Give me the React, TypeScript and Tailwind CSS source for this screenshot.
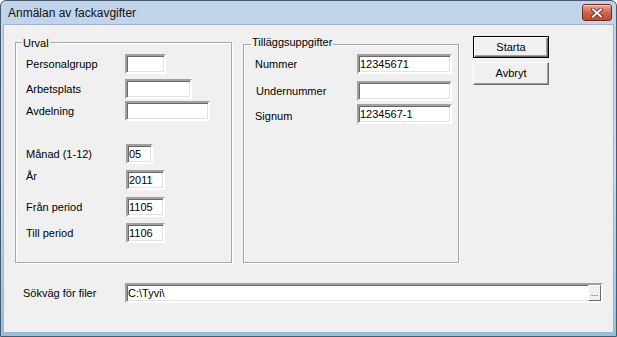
const sunken =
  "bg-white border-2 border-t-[#a0a0a0] border-l-[#a0a0a0] border-r-white border-b-white shadow-[inset_1px_1px_0_#696969,inset_-1px_-1px_0_#e3e3e3] h-[20px] flex items-center pl-[1px] text-black";

function Field({ value, w }: { value?: string; w: string }) {
  return <div className={`${sunken} ${w}`}>{value}</div>;
}

function CloseButton() {
  return (
    <button className="ml-auto mr-[4px] mt-[3px] self-start w-[30px] h-[17px] rounded-[3px] border border-[#6e2a1c] bg-gradient-to-b from-[#e9a99a] via-[#d2634c] to-[#c44a2f] shadow-[inset_0_1px_0_#f5cfc4] flex items-center justify-center">
      <svg width="12" height="10" viewBox="0 0 12 10">
        <path d="M2 1.5 L10 8.5 M10 1.5 L2 8.5" stroke="#5a2418" strokeWidth="3.6" strokeLinecap="square" />
        <path d="M2 1.5 L10 8.5 M10 1.5 L2 8.5" stroke="#ffffff" strokeWidth="2" strokeLinecap="square" />
      </svg>
    </button>
  );
}

export default function App() {
  return (
    <div className="w-[617px] h-[337px] bg-white font-['Liberation_Sans',Arial,sans-serif]">
      <div className="w-full h-full flex flex-col rounded-t-[6px] border border-[#4a5a6e] bg-gradient-to-b from-[#bfd4eb] via-[#c9dcf1] to-[#8fc4e8]">
        {/* title bar */}
        <div className="h-[23px] flex items-center pl-[7px]">
          <span className="text-[12px] leading-[15px] text-[#111] mt-[1px]">Anmälan av fackavgifter</span>
          <CloseButton />
        </div>

        {/* client area */}
        <div className="flex-1 mx-[2px] mb-[3px] border border-[#9fb3c9] bg-[#f0f0f0] text-[11px] leading-[13px] text-black">
          <div className="flex items-start pt-[11px] pl-[11px]">
            {/* Urval */}
            <div className="relative mt-[6px] w-[217px] h-[221px] border border-[#a8a8a8] shadow-[inset_1px_1px_0_#fff,1px_1px_0_#fff] pl-[10px] pt-[11px]">
              <span className="absolute -top-[6px] left-[6px] bg-[#f0f0f0] px-[1px]">Urval</span>
              <div className="flex items-center h-[20px]">
                <span className="w-[99px]">Personalgrupp</span>
                <Field w="w-[41px]" />
              </div>
              <div className="flex items-center h-[20px] mt-[5px]">
                <span className="w-[99px]">Arbetsplats</span>
                <Field w="w-[67px]" />
              </div>
              <div className="flex items-center h-[20px] mt-[2px]">
                <span className="w-[99px]">Avdelning</span>
                <Field w="w-[85px]" />
              </div>
              <div className="flex items-center h-[20px] mt-[23px]">
                <span className="w-[100px]">Månad (1-12)</span>
                <Field value="05" w="w-[27px]" />
              </div>
              <div className="flex items-center h-[20px] mt-[6px]">
                <span className="w-[100px] mb-[7px]">År</span>
                <Field value="2011" w="w-[39px]" />
              </div>
              <div className="flex items-center h-[20px] mt-[7px]">
                <span className="w-[100px]">Från period</span>
                <Field value="1105" w="w-[39px]" />
              </div>
              <div className="flex items-center h-[20px] mt-[6px]">
                <span className="w-[100px]">Till period</span>
                <Field value="1106" w="w-[39px]" />
              </div>
            </div>

            {/* Tilläggsuppgifter */}
            <div className="relative ml-[11px] mt-[8px] w-[216px] h-[219px] border border-[#a8a8a8] shadow-[inset_1px_1px_0_#fff,1px_1px_0_#fff] pl-[11px] pt-[9px]">
              <span className="absolute -top-[9px] left-[7px] bg-[#f0f0f0] px-[1px]">Tilläggsuppgifter</span>
              <div className="flex items-center h-[20px]">
                <span className="w-[102px]">Nummer</span>
                <Field value="12345671" w="w-[95px]" />
              </div>
              <div className="flex items-center h-[20px] mt-[7px]">
                <span className="w-[102px] pl-[1px]">Undernummer</span>
                <Field w="w-[95px]" />
              </div>
              <div className="flex items-center h-[20px] mt-[3px]">
                <span className="w-[102px] mt-[5px]">Signum</span>
                <Field value="1234567-1" w="w-[95px]" />
              </div>
            </div>

            {/* buttons */}
            <div className="ml-[14px] flex flex-col">
              <button className="w-[76px] h-[22px] border border-black bg-[#f0f0f0] shadow-[inset_1px_1px_0_#fff,inset_-1px_-1px_0_#696969,inset_-2px_-2px_0_#a0a0a0]">
                Starta
              </button>
              <button className="mt-[4px] w-[76px] h-[23px] border border-t-white border-l-white border-r-[#696969] border-b-[#696969] bg-[#f0f0f0] shadow-[inset_-1px_-1px_0_#a0a0a0]">
                Avbryt
              </button>
            </div>
          </div>

          {/* path row */}
          <div className="flex items-center mt-[20px] ml-[19px]">
            <span className="w-[102px]">Sökväg för filer</span>
            <div className={`${sunken} w-[478px] pr-0`}>
              <span>{"C:\\Tyvi\\"}</span>
              <button className="ml-auto w-[13px] h-[16px] border border-t-white border-l-white border-r-[#696969] border-b-[#696969] bg-[#f0f0f0] text-[9px] leading-[9px] text-[#333] flex items-end justify-center pb-[2px]">
                ...
              </button>
            </div>
          </div>
        </div>
      </div>
    </div>
  );
}
